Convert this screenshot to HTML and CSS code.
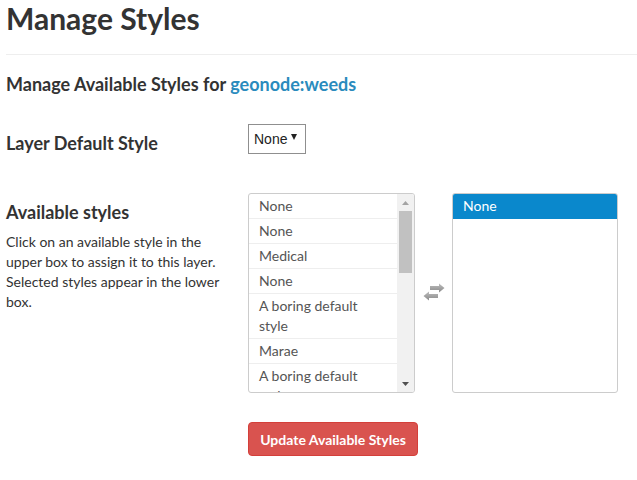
FILE: index.html
```html
<!DOCTYPE html>
<html>
<head>
<meta charset="utf-8">
<link rel="stylesheet" href="styles.css">
</head>
<body>
<div class="page">
  <h1 class="title">Manage Styles</h1>
  <hr class="rule">
  <h3 class="subtitle">Manage Available Styles for <a class="link" href="#">geonode:weeds</a></h3>

  <div class="row row-default">
    <div class="label-col">
      <h4 class="label">Layer Default Style</h4>
    </div>
    <div class="control-col">
      <div class="select">
        <span class="select-text">None</span>
        <svg class="select-arrow" width="6" height="6" viewBox="0 0 6 6"><path d="M0 0 H6 L3 6 Z" fill="#222"/></svg>
      </div>
    </div>
  </div>

  <div class="row row-available">
    <div class="label-col">
      <h4 class="label">Available styles</h4>
      <p class="help">Click on an available style in the upper box to assign it to this layer. Selected styles appear in the lower box.</p>
    </div>
    <div class="control-col">
      <div class="pickers">
        <div class="listbox listbox-left">
          <ul class="items">
            <li class="item">None</li>
            <li class="item">None</li>
            <li class="item">Medical</li>
            <li class="item">None</li>
            <li class="item">A boring default style</li>
            <li class="item">Marae</li>
            <li class="item">A boring default style</li>
          </ul>
          <div class="scrollbar">
            <svg class="sb-arrow" width="7" height="4" viewBox="0 0 7 4"><path d="M0 4 H7 L3.5 0 Z" fill="#a3a3a3"/></svg>
            <div class="sb-track"><div class="sb-thumb"></div></div>
            <svg class="sb-arrow" width="7" height="4" viewBox="0 0 7 4"><path d="M0 0 H7 L3.5 4 Z" fill="#505050"/></svg>
          </div>
        </div>
        <div class="swap">
          <svg width="22" height="18" viewBox="0 0 22 18">
            <defs>
              <linearGradient id="g" x1="0" y1="0" x2="0" y2="1">
                <stop offset="0" stop-color="#bdbdbd"/>
                <stop offset="1" stop-color="#8a8a8a"/>
              </linearGradient>
            </defs>
            <path d="M7 3 H16 V0.5 L21.5 5 L16 9.5 V7 H7 Z" fill="url(#g)"/>
            <path d="M15 11 H6 V8.5 L0.5 13 L6 17.5 V15 H15 Z" fill="url(#g)"/>
          </svg>
        </div>
        <div class="listbox listbox-right">
          <ul class="items">
            <li class="item item-selected">None</li>
          </ul>
        </div>
      </div>
      <button class="btn-danger" type="button">Update Available Styles</button>
    </div>
  </div>
</div>
</body>
</html>
```

FILE: styles.css
```css
html, body {
  margin: 0;
  padding: 0;
  background: #fff;
}
body {
  font-family: Lato, "Open Sans", sans-serif;
  color: #333;
}
.page {
  padding: 0 0 0 6px;
}
.title {
  margin: 0;
  font-size: 30px;
  line-height: 36px;
  font-weight: 700;
  color: #333;
}
.rule {
  margin: 18px 0 0 0;
  border: 0;
  border-top: 1px solid #eee;
  height: 0;
}
.subtitle {
  margin: 18px 0 0 0;
  font-size: 18px;
  line-height: 22px;
  font-weight: 700;
  color: #333;
}
.link {
  color: #2a8bbd;
  text-decoration: none;
}
.row {
  display: grid;
  grid-template-columns: 242px auto;
}
.row-default {
  margin-top: 29px;
}
.row-available {
  margin-top: 39px;
}
.label {
  margin: 0;
  padding-top: 8px;
  font-size: 18px;
  line-height: 22px;
  font-weight: 700;
  color: #333;
}
.help {
  margin: 9px 0 0 0;
  font-size: 14px;
  line-height: 20px;
  color: #333;
  width: 215px;
}
.select {
  width: 56px;
  height: 28px;
  border: 1px solid #8f8f8f;
  display: flex;
  align-items: center;
  box-sizing: content-box;
  font-family: "Liberation Sans", Arial, sans-serif;
  font-size: 14px;
  color: #222;
}
.select-text {
  padding-left: 5px;
  flex: 1;
}
.select-arrow {
  margin-right: 8px;
  margin-top: -4px;
}
.pickers {
  display: flex;
  align-items: center;
}
.listbox {
  height: 198px;
  border: 1px solid #ccc;
  border-radius: 3px;
  background: #fff;
  overflow: hidden;
  display: flex;
}
.listbox-left {
  width: 165px;
}
.listbox-right {
  width: 164px;
}
.items {
  list-style: none;
  margin: 0;
  padding: 0;
  flex: 1;
  font-size: 14px;
  line-height: 20px;
  color: #555;
}
.item {
  padding: 2px 10px 2px 10px;
  border-bottom: 1px solid #eee;
}
.item-selected {
  background: #0a88cc;
  color: #fff;
  border-bottom-color: #0a88cc;
}
.scrollbar {
  width: 17px;
  background: #f1f1f1;
  display: flex;
  flex-direction: column;
  align-items: center;
}
.sb-arrow {
  margin: 7px 0 6px 0;
}
.sb-track {
  flex: 1;
  width: 100%;
  display: flex;
  justify-content: center;
}
.sb-thumb {
  width: 13px;
  height: 62px;
  background: #c1c1c1;
}
.swap {
  width: 37px;
  display: flex;
  justify-content: center;
  padding-bottom: 2px;
}
.btn-danger {
  margin-top: 29px;
  width: 170px;
  height: 34px;
  background: #d9534f;
  border: 1px solid #d43f3a;
  border-radius: 4px;
  color: #fff;
  font-family: Lato, "Open Sans", sans-serif;
  font-size: 14px;
  font-weight: 700;
  padding: 0;
}
```
